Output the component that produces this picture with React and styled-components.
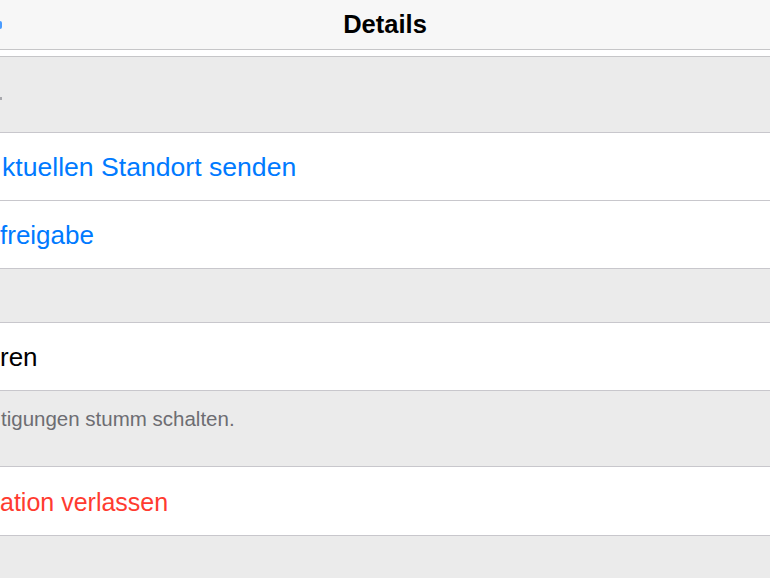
import React from "react";
import styled, { createGlobalStyle } from "styled-components";

const GlobalStyle = createGlobalStyle`
  html, body {
    margin: 0;
    padding: 0;
    background: #ebebeb;
  }
  body {
    font-family: "Liberation Sans", Arial, sans-serif;
    -webkit-font-smoothing: antialiased;
  }
`;

const Page = styled.div`
  width: 770px;
  height: 578px;
  overflow: hidden;
  background: #ebebeb;
  display: flex;
  flex-direction: column;
`;

const NavBar = styled.div`
  flex: none;
  height: 49px;
  background: #f7f7f7;
  border-bottom: 1px solid #c6c6c8;
  display: grid;
  grid-template-columns: 1fr auto 1fr;
  align-items: center;
`;

// only the tail of the back button shows at the left edge
const BackStub = styled.span`
  justify-self: start;
  width: 2px;
  height: 8px;
  margin-top: 1px;
  border-radius: 0 2px 2px 0;
  background: #4a9cff;
`;

const Title = styled.h1`
  margin: 0;
  font-size: 25.5px;
  font-weight: 700;
  color: #000;
`;

const Spacer = styled.div`
  flex: none;
  height: 6px;
  background: #fff;
  border-bottom: 1px solid #c6c6c8;
`;

const Section = styled.div`
  flex: none;
  height: ${(p) => p.h}px;
  background: #ebebeb;
  border-bottom: 1px solid #c8c7cc;
  display: flex;
  align-items: ${(p) => (p.top ? "flex-start" : "center")};
  padding-top: ${(p) => (p.top ? 16 : 0)}px;
  box-sizing: border-box;
`;

// the last pixel of the section header peeks in from the left
const HeaderStub = styled.span`
  width: 2px;
  height: 3px;
  margin-top: 8px;
  background: #a8a8ad;
`;

const SectionNote = styled.span`
  padding-left: 1px;
  color: #6d6d72;
  font-size: 20.5px;
  white-space: nowrap;
`;

const Row = styled.div`
  flex: none;
  height: ${(p) => p.h || 67}px;
  background: #fff;
  border-bottom: 1px solid #c8c7cc;
  display: flex;
  align-items: center;
  box-sizing: content-box;
`;

const colors = {
  blue: "#007aff",
  red: "#ff3b30",
  black: "#000",
};

const RowLabel = styled.span`
  padding-left: ${(p) => p.inset || 0}px;
  margin-top: 2px;
  color: ${(p) => colors[p.tone]};
  font-size: ${(p) => p.size || 26}px;
  white-space: nowrap;
`;

export default function App() {
  return (
    <>
      <GlobalStyle />
      <Page>
        <NavBar>
          <BackStub />
          <Title>Details</Title>
          <span />
        </NavBar>
        <Spacer />
        <Section h={76}>
          <HeaderStub />
        </Section>
        <Row>
          <RowLabel tone="blue" inset={2} size={26.6}>ktuellen Standort senden</RowLabel>
        </Row>
        <Row>
          <RowLabel tone="blue">freigabe</RowLabel>
        </Row>
        <Section h={54} />
        <Row>
          <RowLabel tone="black">ren</RowLabel>
        </Row>
        <Section h={76} top>
          <SectionNote>tigungen stumm schalten.</SectionNote>
        </Section>
        <Row h={68}>
          <RowLabel tone="red" size={25}>ation verlassen</RowLabel>
        </Row>
        <Section h={60} />
      </Page>
    </>
  );
}
